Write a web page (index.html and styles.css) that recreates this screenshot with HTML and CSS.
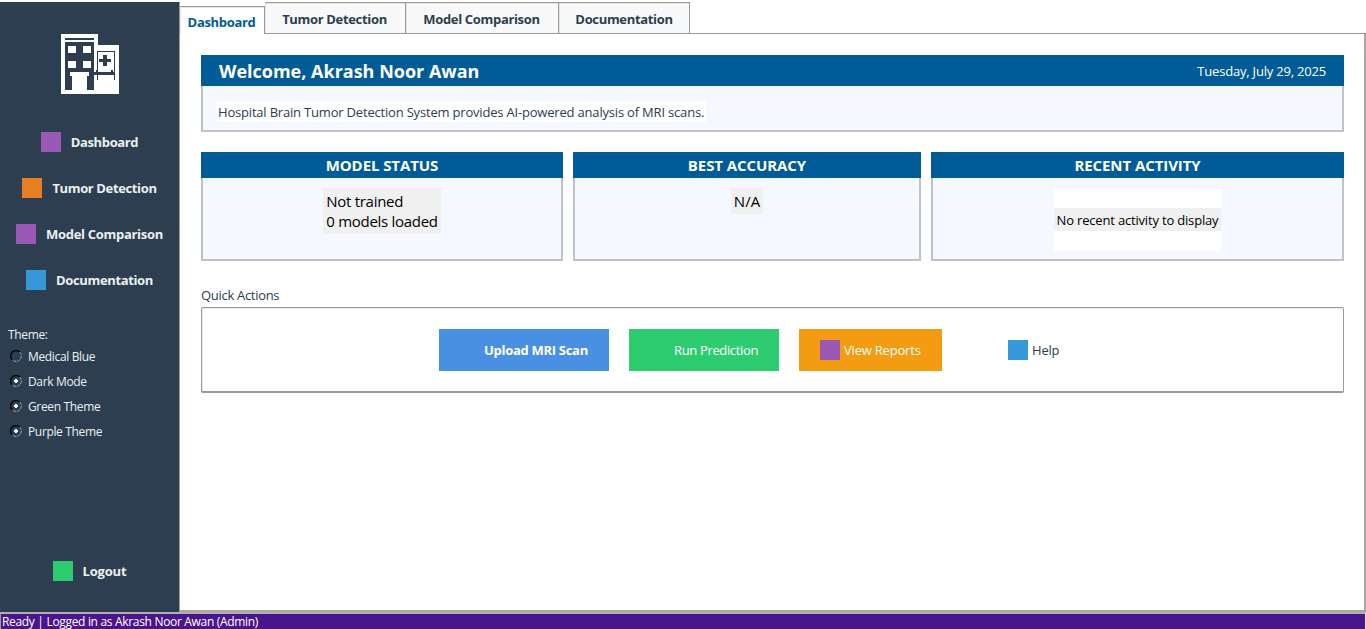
FILE: index.html
```html
<!DOCTYPE html>
<html lang="en">
<head>
<meta charset="utf-8">
<title>Hospital Brain Tumor Detection System</title>
<link rel="stylesheet" href="styles.css">
</head>
<body>
<div class="app">
  <aside class="sidebar">
    <svg class="logo" width="60" height="62" viewBox="0 0 60 62" shape-rendering="crispEdges">
      <path fill="#fff" d="M1 1h37v11h21v49H1z"/>
      <path fill="#2c3e50" d="M5 5h29v2H5zM5 9h29v48h-7V43h2v-4H10v4h2v14H5zM37 18h18v29h-1V19H38v28h-1zM36 37h2v2h-2zM51 37h2v2h-2zM34 39h21v3H34z"/>
      <path fill="#fff" d="M8 13h8v7H8zM23 13h8v7h-8zM8 28h8v7H8zM23 28h8v7h-8zM38 19h15v16H38zM40 37h11v2H40z"/>
      <path fill="#2c3e50" d="M43 22h4v4h4v3h-4v4h-4v-4h-4v-3h4z"/>
    </svg>
    <nav class="nav">
      <a class="nav-item"><i class="swatch purple"></i><span>Dashboard</span></a>
      <a class="nav-item"><i class="swatch orange"></i><span>Tumor Detection</span></a>
      <a class="nav-item wide"><i class="swatch purple"></i><span>Model Comparison</span></a>
      <a class="nav-item"><i class="swatch blue"></i><span>Documentation</span></a>
    </nav>
    <div class="themes">
      <div class="themes-title">Theme:</div>
      <div class="radio"><svg class="dot" width="12" height="12"><use href="#ring"/></svg><span>Medical Blue</span></div>
      <div class="radio"><svg class="dot" width="12" height="12"><use href="#ring"/><use href="#mark"/></svg><span>Dark Mode</span></div>
      <div class="radio"><svg class="dot" width="12" height="12"><use href="#ring"/><use href="#mark"/></svg><span>Green Theme</span></div>
      <div class="radio"><svg class="dot" width="12" height="12"><use href="#ring"/><use href="#mark"/></svg><span>Purple Theme</span></div>
    </div>
    <a class="nav-item logout"><i class="swatch green"></i><span>Logout</span></a>
  </aside>
  <main class="main">
    <div class="tabs">
      <div class="tab active"><span>Dashboard</span></div>
      <div class="tab t2"><span>Tumor Detection</span></div>
      <div class="tab t3"><span>Model Comparison</span></div>
      <div class="tab t4"><span>Documentation</span></div>
      <div class="tab-rest"></div>
    </div>
    <div class="panel">
      <section class="welcome">
        <header class="welcome-head"><h1>Welcome, Akrash Noor Awan</h1><span class="date">Tuesday, July 29, 2025</span></header>
        <div class="welcome-body"><p>Hospital Brain Tumor Detection System provides AI-powered analysis of MRI scans.</p></div>
      </section>
      <div class="cards">
        <section class="card"><h2>MODEL STATUS</h2><div class="card-body"><div class="value">Not trained<br>0 models loaded</div></div></section>
        <section class="card"><h2>BEST ACCURACY</h2><div class="card-body"><div class="value na">N/A</div></div></section>
        <section class="card"><h2>RECENT ACTIVITY</h2><div class="card-body"><div class="recent"><div class="recent-text">No recent activity to display</div></div></div></section>
      </div>
      <div class="quick-title">Quick Actions</div>
      <div class="quick">
        <div class="btn upload"><span>Upload MRI Scan</span></div>
        <div class="btn run"><span>Run Prediction</span></div>
        <div class="btn reports"><i class="swatch purple"></i><span>View Reports</span></div>
        <div class="btn help"><i class="swatch blue"></i><span>Help</span></div>
      </div>
    </div>
  </main>
</div>
<footer class="statusbar">Ready | Logged in as Akrash Noor Awan (Admin)</footer>
<svg width="0" height="0" class="defs">
  <defs>
    <g id="ring" fill="none"><path d="M2.2 9.8A5.3 5.3 0 0 1 9.8 2.2" stroke="#000" stroke-width="1.4"/><path d="M9.8 2.2A5.3 5.3 0 0 1 2.2 9.8" stroke="#a3abb3" stroke-width="1" stroke-dasharray="3 1"/></g>
    <path id="mark" fill="#fff" d="M5 4h2v1h1v2H7v1H5V7H4V5h1z"/>
  </defs>
</svg>
</body>
</html>
```
FILE: styles.css
```css
* { box-sizing: border-box; }
body { margin: 0; height: 629px; overflow: hidden; background: #fff; padding-top: 2px; display: flex; flex-direction: column; font: 13px "Open Sans", "Noto Sans", sans-serif; color: #2c3e50; white-space: nowrap; }
.app { display: flex; height: 610px; }
.defs { position: absolute; }
.sidebar { width: 179px; background: #2c3e50; color: #ecf0f1; display: flex; flex-direction: column; padding-top: 31px; }
.logo { margin: 0 0 24px 60px; flex: none; }
.nav-item { height: 46px; display: flex; align-items: center; justify-content: center; gap: 10px; font-weight: 700; letter-spacing: -0.37px; }
.wide { letter-spacing: -0.3px; }
.swatch { width: 20px; height: 20px; flex: none; }
.purple { background: #9b59b6; }
.orange { background: #e67e22; }
.blue { background: #3498db; }
.green { background: #2ecc71; }
.themes { padding: 18px 0 0 8px; font-size: 12px; letter-spacing: -0.35px; }
.themes-title { height: 23px; line-height: 27px; }
.radio { height: 25px; display: flex; align-items: center; gap: 6px; padding-left: 2px; }
.dot { margin-top: -1px; }
.logout { margin-top: auto; margin-bottom: 18px; letter-spacing: -0.2px; }
.main { width: 1187px; border-left: 1px solid #9e9a91; display: flex; flex-direction: column; }
.tabs { display: flex; height: 32px; align-items: flex-end; font-weight: 700; letter-spacing: -0.33px; }
.tab { height: 32px; border: 1px solid #9e9a91; border-left: 0; background: #f8f9fa; box-shadow: inset 1px 1px #e8e6e1; display: flex; align-items: center; justify-content: center; padding: 2px 1px 0 0; }
.active { width: 85px; height: 28px; background: #fff; color: #005b96; border-bottom: 0; padding: 3px 1px 0 0; }
.t2 { width: 141px; }
.t3 { width: 153px; }
.t4 { width: 131px; padding-right: 0; }
.tab-rest { flex: 1; border-bottom: 1px solid #9e9a91; }
.panel { flex: 1; border-right: 2px solid #aaa69e; border-bottom: 2px solid #aaa69e; padding: 21px 20px 0 21px; }
.welcome { height: 77px; border: 2px solid #bdc3c7; border-top: 0; border-radius: 1px; background: #f5f8ff; }
.welcome-head { margin: 0 -2px; height: 31px; background: #005b96; color: #fff; display: flex; align-items: center; justify-content: space-between; padding: 0 18px; }
h1 { margin: 0; font-size: 18px; font-weight: 700; letter-spacing: 0; }
.date { letter-spacing: -0.2px; }
.welcome-body { padding: 15px 13px; }
.welcome-body p { margin: 0; background: #fff; display: inline-block; height: 21px; line-height: 22px; padding: 0 2px; letter-spacing: -0.19px; }
.cards { margin-top: 20px; display: grid; grid-template-columns: 362px 348px 413px; gap: 10px; }
.card { height: 109px; border: 2px solid #bdc3c7; border-top: 0; border-radius: 1px; background: #f5f8ff; }
h2 { margin: 0 -2px; height: 26px; line-height: 26px; background: #005b96; color: #fff; text-align: center; font-size: 15px; font-weight: 700; letter-spacing: -0.08px; }
.card-body { padding-top: 10px; display: flex; justify-content: center; color: #000; }
.value { background: #f0f0f0; font-size: 15px; line-height: 20px; padding: 3px; letter-spacing: -0.28px; }
.na { letter-spacing: 0; }
.recent { background: #fff; padding: 20px 0; }
.recent-text { background: #f0f0f0; height: 23px; line-height: 24px; padding: 0 3px; letter-spacing: -0.18px; }
.quick-title { margin-top: 25px; height: 21px; line-height: 18px; letter-spacing: -0.3px; }
.quick { height: 86px; border: 1px solid #9e9a91; border-bottom-width: 2px; border-radius: 2px; box-shadow: inset 1px 1px #eeebe6; padding: 21px 0 0 237px; display: flex; }
.btn { height: 42px; display: flex; align-items: center; color: #fff; gap: 4px; margin-right: 20px; letter-spacing: -0.2px; }
.upload { width: 170px; background: #4a90e2; padding-left: 45px; font-weight: 700; letter-spacing: -0.29px; }
.run { width: 150px; background: #2ecc71; padding-left: 45px; letter-spacing: -0.35px; }
.reports { width: 143px; background: #f39c12; padding-left: 21px; }
.help { color: #2c3e50; padding-left: 46px; }
.statusbar { height: 17px; background: #4a148c; border-top: 2px solid #b3aeb5; border-left: 1px solid #9e9a91; border-right: 1px solid #e8e6e1; color: #fff; font-size: 12px; line-height: 16px; padding-left: 1px; letter-spacing: -0.32px; }
```
